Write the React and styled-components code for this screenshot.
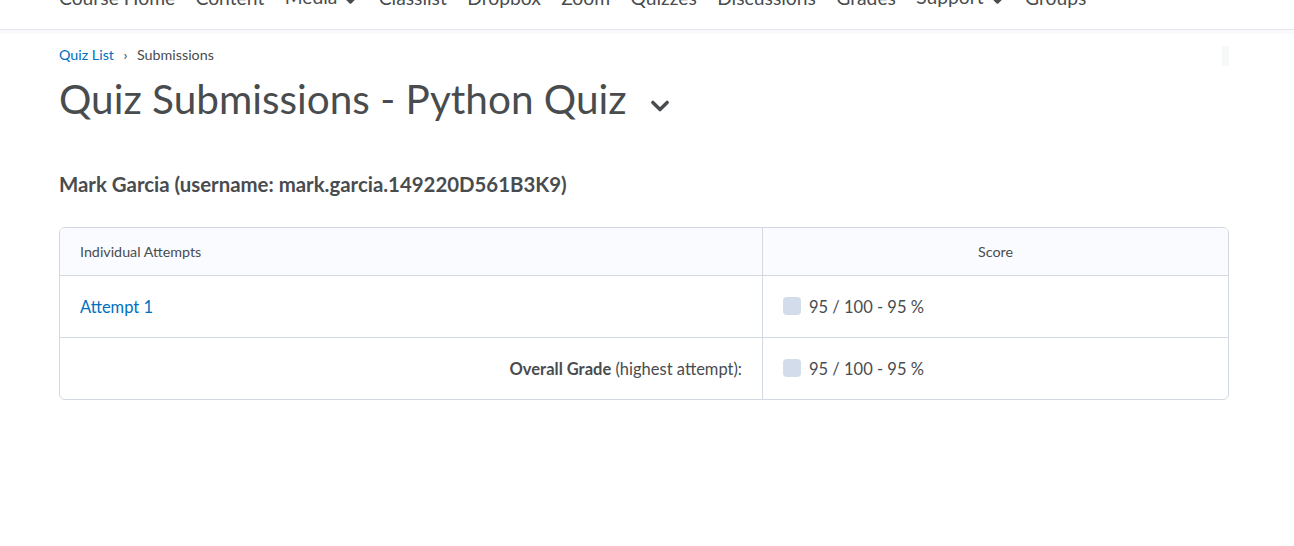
import React from "react";
import styled, { createGlobalStyle } from "styled-components";

const GlobalStyle = createGlobalStyle`
  body {
    margin: 0;
    background: #fff;
    font-family: Lato, "Open Sans", sans-serif;
    color: #494c4e;
  }
`;

const NavBar = styled.nav`
  height: 30px;
  overflow: hidden;
  display: flex;
  align-items: flex-end;
  gap: 20.3px;
  padding: 0 0 22px 59px;
  box-sizing: border-box;
  border-bottom: 1px solid #e3e5e8;
  box-shadow: 0 4px 0 #f9fafb;
`;

const NavItem = styled.span`
  display: inline-flex;
  align-items: center;
  gap: 6px;
  font-size: 19.3px;
  line-height: 19px;
  color: #494c4e;
  white-space: nowrap;
`;

const NavCaret = styled.span`
  display: inline-flex;
  margin-top: 7px;
`;

const Page = styled.main`
  padding: 16px 65px 0 59px;
`;

const TopRow = styled.div`
  display: flex;
  justify-content: space-between;
  align-items: flex-start;
`;

const Crumbs = styled.div`
  display: flex;
  align-items: center;
  gap: 9.5px;
  font-size: 14.3px;
  line-height: 18px;
`;

const CrumbLink = styled.a`
  color: #006fbf;
  text-decoration: none;
`;

const Ghost = styled.div`
  width: 7px;
  height: 20px;
  background: #f7f9f8;
`;

const TitleRow = styled.div`
  display: flex;
  align-items: center;
  gap: 23px;
  margin-top: 9px;
`;

const Title = styled.h1`
  margin: 0;
  font-size: 40.5px;
  font-weight: 400;
  line-height: 48px;
  color: #494c4e;
`;

const Chevron = styled.span`
  display: inline-flex;
  margin-top: 14px;
`;

const UserName = styled.h2`
  margin: 48px 0 0;
  font-size: 20.4px;
  font-weight: 700;
  line-height: 26px;
  color: #494c4e;
`;

const Table = styled.div`
  margin-top: 30px;
  border: 1px solid #d3d9e3;
  border-radius: 6px;
  overflow: hidden;
  display: grid;
  grid-template-columns: 702px 1fr;
`;

const HeadCell = styled.div`
  background: #f9fbff;
  height: 47px;
  display: flex;
  align-items: center;
  justify-content: ${(p) => (p.$center ? "center" : "flex-start")};
  padding: 0 20px;
  font-size: 14.3px;
  color: #494c4e;
  border-bottom: 1px solid #d3d9e3;
  border-left: ${(p) => (p.$divider ? "1px solid #d3d9e3" : "none")};
`;

const Cell = styled.div`
  height: 61px;
  display: flex;
  align-items: center;
  justify-content: ${(p) => (p.$right ? "flex-end" : "flex-start")};
  padding: 0 20px;
  font-size: 16.5px;
  color: #494c4e;
  border-bottom: ${(p) => (p.$last ? "none" : "1px solid #d3d9e3")};
  border-left: ${(p) => (p.$divider ? "1px solid #d3d9e3" : "none")};
`;

const AttemptLink = styled.a`
  color: #006fbf;
  text-decoration: none;
`;

const Score = styled.span`
  display: inline-flex;
  align-items: center;
  gap: 8px;
`;

const Swatch = styled.span`
  width: 18px;
  height: 18px;
  border-radius: 4px;
  background: #d3dceb;
  margin-top: -2px;
`;

const Light = styled.span`
  font-weight: 400;
`;

function Caret({ size = 14, color = "#494c4e", stroke = 2.6 }) {
  return (
    <svg width={size} height={size} viewBox="0 0 14 14">
      <path
        d="M2 4.5 L7 9.5 L12 4.5"
        fill="none"
        stroke={color}
        strokeWidth={stroke}
        strokeLinecap="round"
        strokeLinejoin="round"
      />
    </svg>
  );
}

const navItems = [
  { label: "Course Home" },
  { label: "Content" },
  { label: "Media", menu: true },
  { label: "Classlist" },
  { label: "Dropbox" },
  { label: "Zoom" },
  { label: "Quizzes" },
  { label: "Discussions" },
  { label: "Grades" },
  { label: "Support", menu: true },
  { label: "Groups" },
];

function ScoreValue() {
  return (
    <Score>
      <Swatch />
      95 / 100 - 95 %
    </Score>
  );
}

export default function App() {
  return (
    <>
      <GlobalStyle />
      <NavBar>
        {navItems.map((item) => (
          <NavItem key={item.label}>
            {item.label}
            {item.menu && (
              <NavCaret>
                <Caret size={15} stroke={2.8} />
              </NavCaret>
            )}
          </NavItem>
        ))}
      </NavBar>
      <Page>
        <TopRow>
          <Crumbs>
            <CrumbLink href="#">Quiz List</CrumbLink>
            <span>›</span>
            <span>Submissions</span>
          </Crumbs>
          <Ghost />
        </TopRow>
        <TitleRow>
          <Title>Quiz Submissions - Python Quiz</Title>
          <Chevron>
            <Caret size={20} stroke={2.4} />
          </Chevron>
        </TitleRow>
        <UserName>Mark Garcia (username: mark.garcia.149220D561B3K9)</UserName>
        <Table>
          <HeadCell>Individual Attempts</HeadCell>
          <HeadCell $center $divider>
            Score
          </HeadCell>
          <Cell>
            <AttemptLink href="#">Attempt 1</AttemptLink>
          </Cell>
          <Cell $divider>
            <ScoreValue />
          </Cell>
          <Cell $right $last>
            <span>
              <strong>Overall Grade</strong> <Light>(highest attempt):</Light>
            </span>
          </Cell>
          <Cell $divider $last>
            <ScoreValue />
          </Cell>
        </Table>
      </Page>
    </>
  );
}
